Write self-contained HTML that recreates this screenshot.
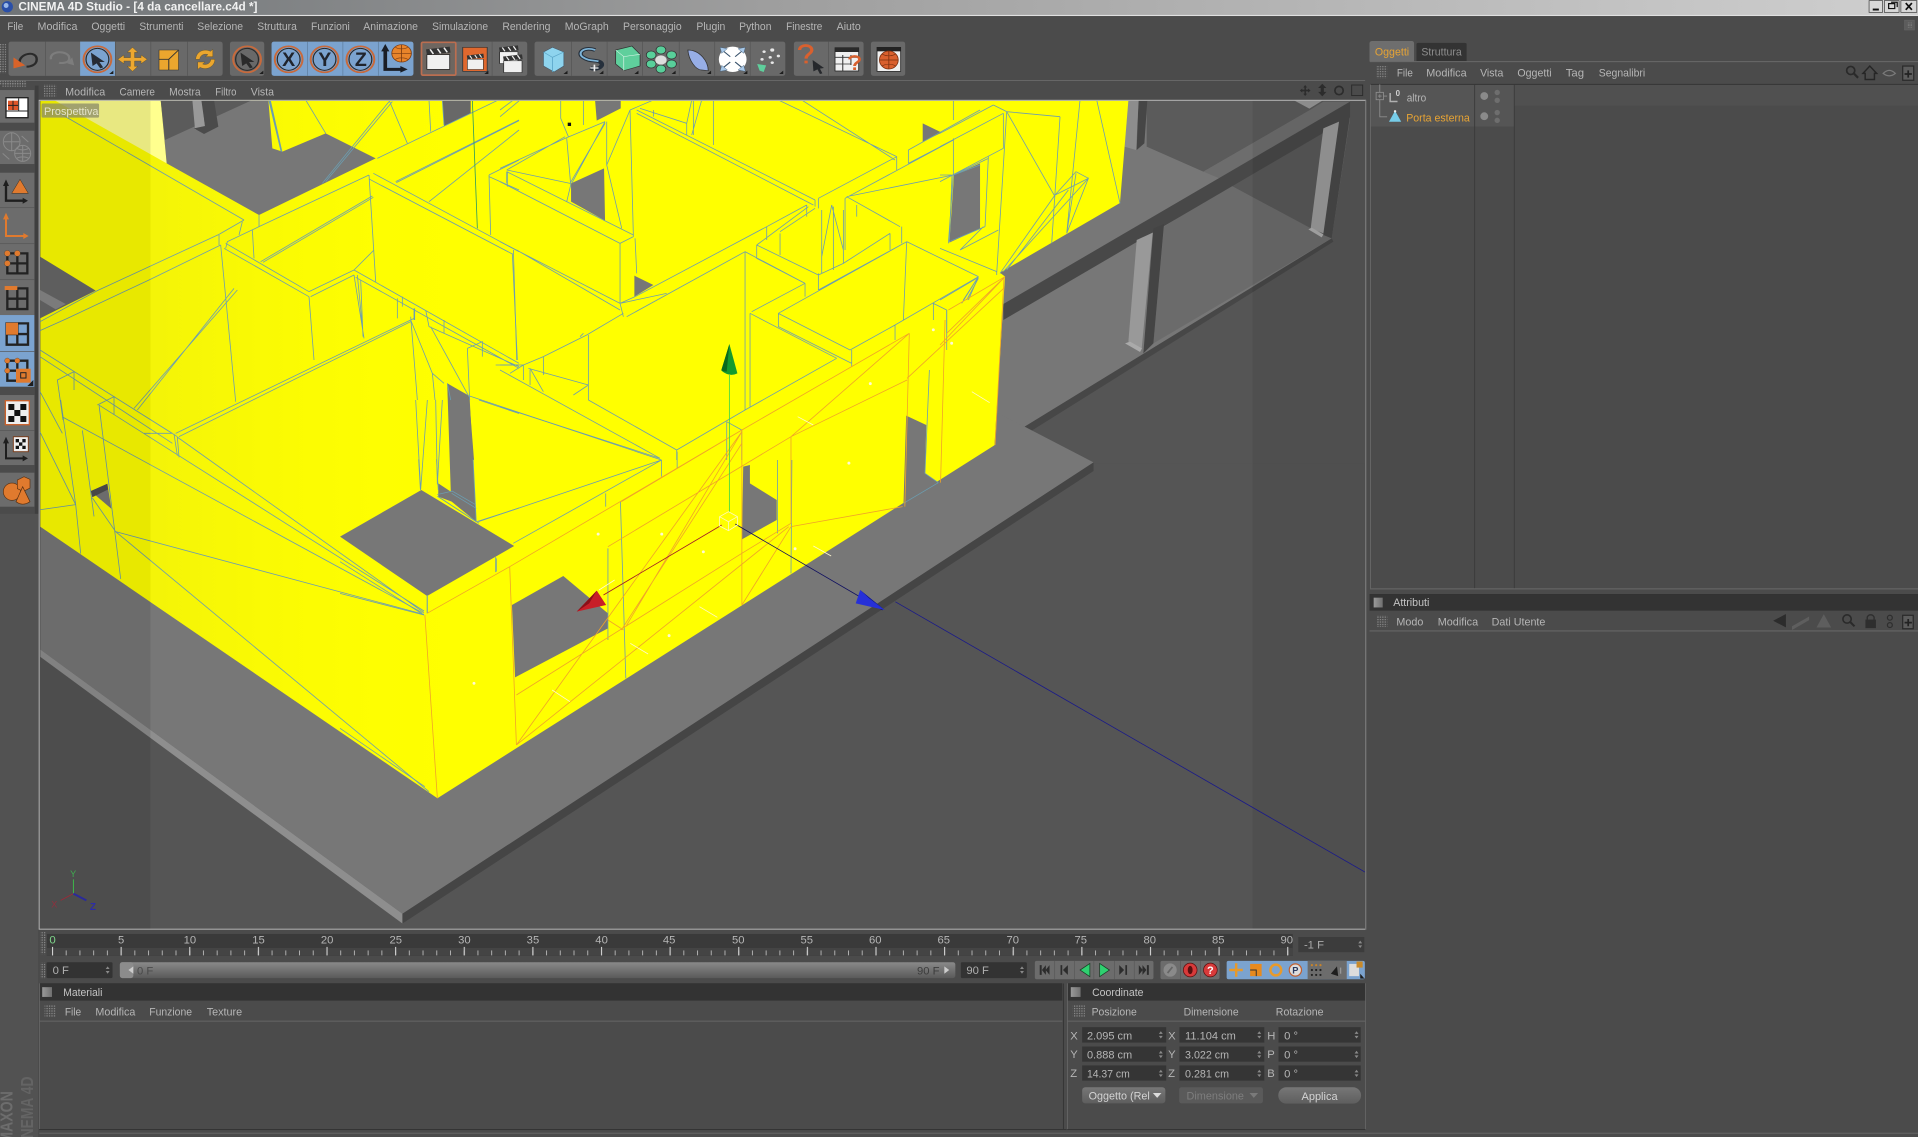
<!DOCTYPE html>
<html lang="it"><head><meta charset="utf-8"><title>CINEMA 4D Studio</title>
<style>
html,body{margin:0;padding:0;background:#4b4b4b;width:1918px;height:1137px;overflow:hidden}
svg{display:block}
text{font-family:"Liberation Sans",sans-serif;font-size:9.2px;fill:#b6b6b6}
.l path,path.l{fill:none;vector-effect:non-scaling-stroke;stroke-width:.8}
.b path{stroke:#6c9db0}
.o path{stroke:#f0a428}
.w path{stroke:#fff8d0}
</style></head><body>
<svg width="1918" height="1137" viewBox="0 0 1568 929.5" preserveAspectRatio="none" xmlns="http://www.w3.org/2000/svg">
<defs>
<linearGradient id="tb" x1="0" x2="1" y1="0" y2="0"><stop offset="0" stop-color="#6f7376"/><stop offset=".4" stop-color="#9e9e9e"/><stop offset="1" stop-color="#cfcfcf"/></linearGradient>
<linearGradient id="sl" x1="0" x2="0" y1="0" y2="1"><stop offset="0" stop-color="#8a8a8a"/><stop offset="1" stop-color="#5a5a5a"/></linearGradient>
<linearGradient id="btn" x1="0" x2="0" y1="0" y2="1"><stop offset="0" stop-color="#777"/><stop offset="1" stop-color="#5e5e5e"/></linearGradient>
<linearGradient id="sq" x1="0" x2="1" y1="0" y2="0"><stop offset="0" stop-color="#9a9a9a"/><stop offset="1" stop-color="#707070"/></linearGradient>
<linearGradient id="yg" x1="123" x2="403" y1="0" y2="0" gradientUnits="userSpaceOnUse"><stop offset="0" stop-color="#e8e810" stop-opacity=".5"/><stop offset="1" stop-color="#ffff00" stop-opacity="0"/></linearGradient>
<clipPath id="ycl"><path d="M33 82 H922.5 L915.6 166 L817.5 223 L821.6 226 L813 364 L357.6 652.6 L33 430.6Z"/></clipPath>
<pattern id="gp" width="2" height="2" patternUnits="userSpaceOnUse"><rect width="1" height="1" fill="#8e8e8e"/></pattern>
<pattern id="tk" width="11.22" height="20" patternUnits="userSpaceOnUse" patternTransform="translate(42.5,776)"><rect width=".8" y="1" height="4" fill="#b0b0b0"/></pattern>
<pattern id="tkb" width="56.1" height="20" patternUnits="userSpaceOnUse" patternTransform="translate(42.5,774)"><rect width=".9" height="7" fill="#d0d0d0"/></pattern>
<path id="sp" d="M0-3 L1.6-.8 H-1.6Z M0 3 L1.6 .8 H-1.6Z" fill="#8a8a8a"/>
<g id="ring"><ellipse rx="34" ry="39" fill="none" stroke="#c86a3c" stroke-width="5"/><ellipse rx="28" ry="33" fill="none" stroke="#2a2a2a" stroke-width="3"/></g>
<g id="clap"><rect x="-28" y="-12" width="56" height="44" fill="#f0f0f0" stroke="#222" stroke-width="2"/><path d="M-30-28 L28-36 L30-18 L-28-12Z" fill="#333"/><path d="M-20-28 l8 14 M-2-30 l8 14 M14-33 l8 14" stroke="#eee" stroke-width="4" fill="none"/></g>
<path id="tri" d="M0 0 l10 0 l0 -10 z" fill="#1d1d1d"/>
</defs>

<rect width="1568" height="930" fill="#4b4b4b"/>
<!-- title -->
<rect width="1568" height="12.4" fill="url(#tb)"/>
<rect y="12.2" width="1568" height=".9" fill="#e0e0e0"/>
<circle cx="6" cy="5.5" r="4.6" fill="#2a4fa8"/><circle cx="5" cy="4.5" r="2" fill="#9ab8e8"/>
<text x="15" y="8.6" textLength="195.5" lengthAdjust="spacingAndGlyphs" style="font-size:9.6px;font-weight:bold;fill:#f2f2f2">CINEMA 4D Studio - [4 da cancellare.c4d *]</text>
<g stroke="#444" stroke-width=".6"><rect x="1528" y=".5" width="11" height="9.6" fill="#d8d8d8"/><rect x="1540.5" y=".5" width="12" height="9.6" fill="#d8d8d8"/><rect x="1554" y=".5" width="13" height="9.6" fill="#d8d8d8"/></g>
<rect x="1531" y="7" width="5" height="1.6" fill="#111"/>
<path d="M1544 3h5v4h-5z M1546 1.8h5v4" fill="none" stroke="#111" stroke-width="1"/>
<path d="M1558 2.5 l5 5.5 M1563 2.5 l-5 5.5" stroke="#111" stroke-width="1.4"/>

<!-- menu -->
<g>
<text x="6" y="24.4" textLength="13" lengthAdjust="spacingAndGlyphs">File</text>
<text x="30.7" y="24.4" textLength="32.6" lengthAdjust="spacingAndGlyphs">Modifica</text>
<text x="74.7" y="24.4" textLength="27.6" lengthAdjust="spacingAndGlyphs">Oggetti</text>
<text x="114" y="24.4" textLength="36" lengthAdjust="spacingAndGlyphs">Strumenti</text>
<text x="161.3" y="24.4" textLength="37.4" lengthAdjust="spacingAndGlyphs">Selezione</text>
<text x="210.3" y="24.4" textLength="32.4" lengthAdjust="spacingAndGlyphs">Struttura</text>
<text x="254.3" y="24.4" textLength="31.7" lengthAdjust="spacingAndGlyphs">Funzioni</text>
<text x="297" y="24.4" textLength="44.7" lengthAdjust="spacingAndGlyphs">Animazione</text>
<text x="353.3" y="24.4" textLength="45.7" lengthAdjust="spacingAndGlyphs">Simulazione</text>
<text x="410.7" y="24.4" textLength="39.3" lengthAdjust="spacingAndGlyphs">Rendering</text>
<text x="461.7" y="24.4" textLength="36" lengthAdjust="spacingAndGlyphs">MoGraph</text>
<text x="509.3" y="24.4" textLength="48" lengthAdjust="spacingAndGlyphs">Personaggio</text>
<text x="569.3" y="24.4" textLength="23.7" lengthAdjust="spacingAndGlyphs">Plugin</text>
<text x="604.3" y="24.4" textLength="26.4" lengthAdjust="spacingAndGlyphs">Python</text>
<text x="642.7" y="24.4" textLength="29.6" lengthAdjust="spacingAndGlyphs">Finestre</text>
<text x="684" y="24.4" textLength="19.7" lengthAdjust="spacingAndGlyphs">Aiuto</text>
</g>
<rect x="1557" y="16.5" width="8" height="8" fill="#5c5c5c" stroke="#666" stroke-width=".5"/>
<rect x="1559" y="18.5" width="4" height="4" fill="url(#gp)"/>

<!-- toolbar backgrounds -->
<rect x="0" y="36" width="5" height="24" fill="url(#gp)"/>
<g>
<rect x="7" y="34" width="175" height="28" rx="2" fill="#696969"/>
<rect x="65.5" y="34" width="28.8" height="28" fill="#7ba3cf"/>
<rect x="188" y="34" width="28" height="28" rx="2" fill="#696969"/>
<rect x="222" y="34" width="116" height="28" rx="2" fill="#7ba3cf"/>
<rect x="344" y="34" width="87" height="28" rx="2" fill="#696969"/>
<rect x="344.6" y="34.6" width="28" height="26.8" rx="1" fill="#6e6660" stroke="#bb6e50" stroke-width="1.4"/>
<rect x="437" y="34" width="205" height="28" rx="2" fill="#696969"/>
<rect x="649" y="34" width="57" height="28" rx="2" fill="#696969"/>
<rect x="712" y="34" width="28" height="28" rx="2" fill="#696969"/>
</g>
<g fill="#565656">
<rect x="37" y="34" width=".6" height="28"/><rect x="94" y="34" width=".6" height="28"/><rect x="123" y="34" width=".6" height="28"/><rect x="153" y="34" width=".6" height="28"/>
<rect x="251" y="34" width=".6" height="28" fill="#5f7f9f"/><rect x="280" y="34" width=".6" height="28" fill="#5f7f9f"/><rect x="309" y="34" width=".6" height="28" fill="#5f7f9f"/>
<rect x="402" y="34" width=".6" height="28"/><rect x="467" y="34" width=".6" height="28"/><rect x="496" y="34" width=".6" height="28"/><rect x="525" y="34" width=".6" height="28"/><rect x="555" y="34" width=".6" height="28"/><rect x="584" y="34" width=".6" height="28"/><rect x="613" y="34" width=".6" height="28"/><rect x="677" y="34" width=".6" height="28"/>
</g>
<!-- toolbar icons zoom coords -->
<g transform="scale(.3333,.2725)">
<path d="M48 190 C45 160 90 150 90 178 C90 195 75 200 65 200" fill="none" stroke="#2a2a2a" stroke-width="6"/>
<path d="M33 172 L62 196 L33 205Z" fill="#d8632a"/>
<path d="M125 178 C120 150 170 150 170 175 C170 190 150 190 145 188" fill="none" stroke="#7d7d7d" stroke-width="6"/><path d="M165 190 l12-18 l5 24z" fill="#7d7d7d"/>
<g transform="translate(239,178)"><use href="#ring"/><path d="M-16-20 L18 8 L5 8 L14 24 L7 27 L-2 12 L-12 20Z" fill="#262b33"/></g>
<path d="M325 142 l13 15 h-8 v16 h16 v-8 l15 13 -15 13 v-8 h-16 v16 h8 l-13 15 -13-15 h8 v-16 h-16 v8 l-15-13 15-13 v8 h16 v-16 h-8z" fill="#eda830" stroke="#5a4a20" stroke-width="1"/>
<rect x="390" y="150" width="48" height="60" fill="#eba62e" stroke="#333" stroke-width="1.5"/><path d="M390 178 h24 v32 M414 178 L438 150" stroke="#333" stroke-width="2.5" fill="none"/>
<path d="M480 178 a24 28 0 0 1 36-24 l6-6 v22 h-18 l6-6 a14 16 0 0 0-20 14z M527 178 a24 28 0 0 1-36 24 l-6 6 v-22 h18 l-6 6 a14 16 0 0 0 20-14z" fill="#eba62e" stroke="#5a4a20"/>
<use href="#tri" x="268" y="222"/>
<g transform="translate(606,178)"><use href="#ring"/><path d="M-16-20 L18 8 L5 8 L14 24 L7 27 L-2 12 L-12 20Z" fill="#2a2a2a"/></g>
<use href="#tri" x="636" y="222"/>
<g transform="translate(708,178)"><use href="#ring"/></g><g transform="translate(796,178)"><use href="#ring"/></g><g transform="translate(884,178)"><use href="#ring"/></g>
</g>
<text x="236" y="54" text-anchor="middle" style="font-size:16px;font-weight:bold;fill:#20242c">X</text>
<text x="265.5" y="54" text-anchor="middle" style="font-size:16px;font-weight:bold;fill:#20242c">Y</text>
<text x="295" y="54" text-anchor="middle" style="font-size:16px;font-weight:bold;fill:#20242c">Z</text>
<g transform="scale(.3333,.2725)">
<path d="M945 150 V208 H985" fill="none" stroke="#1a1e26" stroke-width="9"/><path d="M945 132 l-10 22 h20z M1000 208 l-18-10 v20z" fill="#1a1e26"/>
<ellipse cx="985" cy="160" rx="24" ry="26" fill="#e8842a" stroke="#7a3a10" stroke-width="2"/><path d="M961 160h48M985 134v52M970 142c8 6 22 6 30 0M970 178c8-6 22-6 30 0" stroke="#7a3a10" fill="none" stroke-width="2"/>
<use href="#clap" x="1075" y="176"/>
<rect x="1135" y="142" width="60" height="72" fill="#e0682e" stroke="#333" stroke-width="2"/><use href="#clap" transform="translate(1166,186) scale(.7)"/><use href="#tri" x="1188" y="222"/>
<use href="#clap" transform="translate(1248,165) scale(.8)"/><use href="#clap" transform="translate(1258,192) scale(.8)"/>
<path d="M1355 142 l28 14 v42 l-24 18 -26-18 v-42z" fill="#8ed4ee" stroke="#456" stroke-width="1.5"/><path d="M1355 172 l28-16 M1355 172 l-22-16 M1355 172 v44" stroke="#5aa6c8" stroke-width="2" fill="none"/>
<use href="#tri" x="1382" y="222"/>
<path d="M1460 150 c-30-12-45 10-30 22 c15 12 25 8 38 12 c20 8 0 30-20 20" fill="none" stroke="#26303c" stroke-width="11"/><path d="M1460 150 c-30-12-45 10-30 22 c15 12 25 8 38 12" fill="none" stroke="#7db4d8" stroke-width="5"/>
<path d="M1448 204 h20 M1458 194 v20" stroke="#eee" stroke-width="4"/><use href="#tri" x="1470" y="222"/>
<path d="M1510 150 l40-12 l20 25 v35 l-40 14 -20-20z" fill="#5fcf9c" stroke="#333" stroke-width="2"/><path d="M1510 150 l20 20 l40-7 M1530 170 v42" stroke="#e8f8f0" fill="none" stroke-width="1.5"/><use href="#tri" x="1556" y="222"/>
</g>
<g transform="translate(523,0) scale(.3333,.2725)">
<g fill="#58cf9a" stroke="#333" stroke-width="2"><circle cx="52" cy="150" r="12"/><circle cx="78" cy="165" r="12"/><circle cx="78" cy="192" r="12"/><circle cx="52" cy="207" r="12"/><circle cx="28" cy="192" r="12"/><circle cx="28" cy="165" r="12"/></g><circle cx="52" cy="180" r="14" fill="#ddd"/>
<use href="#tri" x="78" y="222"/>
<path d="M118 150 c30 0 50 35 50 62 l-16-2 c-15 0-32-30-34-60z" fill="#97aee6" stroke="#333" stroke-width="2"/><use href="#tri" x="165" y="222"/>
<ellipse cx="228" cy="178" rx="34" ry="38" fill="#fff"/>
<path d="M204 152 l18 18 M252 152 l-18 18 M204 204 l18-18 M252 204 l-18-18" stroke="#36506a" stroke-width="3"/><path d="M197 142 l18 4 -14 14z M259 142 l-18 4 14 14z M197 214 l18-4 -14-14z M259 214 l-18-4 14-14z" fill="#a8c8e8" stroke="#36506a"/>
<use href="#tri" x="254" y="222"/>
<g fill="#e8e8e8"><circle cx="325" cy="150" r="5"/><circle cx="305" cy="155" r="4"/><circle cx="340" cy="168" r="4"/><circle cx="320" cy="172" r="4"/><circle cx="300" cy="178" r="4"/><circle cx="325" cy="188" r="4"/></g><path d="M288 192 l22 4 -6 20 -10-4z" fill="#5fcf9c"/><use href="#tri" x="342" y="222"/>
<path d="M392 150 c0-18 30-18 30 0 c0 12-14 12-14 26 M408 182 v8" fill="none" stroke="#d9602e" stroke-width="8"/>
<path d="M424 180 l28 24 -10 2 6 14 -6 2 -6-14 -10 6z" fill="#26282c"/>
<path d="M479 143 h58 v70 h-58z" fill="#f0f0f0" stroke="#222" stroke-width="2"/><path d="M479 150 h58" stroke="#2a2a2a" stroke-width="12"/><path d="M479 172 h58 M479 192 h40 M498 165 v48 M518 165 v30" stroke="#333" stroke-width="2.5"/>
<path d="M515 178 c0-12 24-12 24 0 c0 9-12 9-12 20 M527 202 v8" fill="none" stroke="#d9602e" stroke-width="7"/>
<rect x="582" y="142" width="58" height="72" fill="#f0f0f0" stroke="#222" stroke-width="2"/><rect x="582" y="142" width="58" height="12" fill="#222"/>
<ellipse cx="611" cy="180" rx="23" ry="27" fill="#d9602e" stroke="#7a3010" stroke-width="2"/><path d="M588 180h46M611 153v54M595 163c10 6 22 6 32 0M595 197c10-6 22-6 32 0" stroke="#7a3010" fill="none" stroke-width="2"/>
</g>

<!-- second bar / view header -->
<rect x="0" y="65.4" width="1116" height=".8" fill="#666"/>
<rect x="0" y="66" width="21" height="3" fill="url(#gp)"/>
<rect x="36" y="69" width="10" height="10" fill="url(#gp)"/>
<text x="53.3" y="78" textLength="32.7" lengthAdjust="spacingAndGlyphs">Modifica</text>
<text x="97.7" y="78" textLength="29" lengthAdjust="spacingAndGlyphs">Camere</text>
<text x="138.3" y="78" textLength="25.7" lengthAdjust="spacingAndGlyphs">Mostra</text>
<text x="176" y="78" textLength="17.3" lengthAdjust="spacingAndGlyphs">Filtro</text>
<text x="205" y="78" textLength="19" lengthAdjust="spacingAndGlyphs">Vista</text>
<g fill="#2c2c2c"><path d="M1067 69.5 l1.6 2h-1v1.8h1.8v-1l2 1.7-2 1.7v-1h-1.8v1.8h1l-1.6 2-1.6-2h1v-1.8h-1.8v1l-2-1.7 2-1.7v1h1.8v-1.8h-1z"/><path d="M1081 68.5 l3.4 3.4h-2.1v3.2h2.1l-3.4 3.7-3.4-3.7h2.1v-3.2h-2.1z"/><circle cx="1094.7" cy="74" r="3.4" fill="none" stroke="#2c2c2c" stroke-width="1.4"/><rect x="1105" y="69.5" width="9" height="8.6" fill="none" stroke="#2c2c2c" stroke-width=".8"/></g>

<!-- VIEWPORT -->
<svg x="32.4" y="82.4" width="1083.4" height="676.8" viewBox="32.4 82.4 1083.4 676.8">
<rect x="32" y="82" width="1085" height="678" fill="#555"/>
<!-- right back scene in zoom11 coords -->
<g transform="translate(768.5,81.75) scale(.2725)">
<path d="M590 0 H1290 V1090 H0 V0Z" fill="#555"/>
<path d="M600 0 L620 140 L790 215 L1110 30 L1050 0Z" fill="#5b5b5b"/>
<path d="M1110 30 L1050 0 H1230 L1230 10Z" fill="#5b5b5b"/>
<path d="M0 0 L620 0 L620 140 L790 215 L1110 30 L1230 5 L1230 55 L1175 415 L254 980 L0 1090Z" fill="#777"/>
<path d="M595 0 L622 0 L613 130 L590 150Z" fill="#464646"/>
<path d="M565 0 L596 0 L588 150 L553 140Z" fill="#8d8d8d"/>
<path d="M790 215 L1110 30 L1150 5 L1230 5 L850 240Z" fill="#6d6d6d"/>
<path d="M1060 0 L1150 0 L1108 26Z" fill="#979797"/>
<path d="M860 250 L1230 50 L1175 415 L1110 385Z" fill="#585858"/>
<path d="M672 380 L870 255 L1150 405 L1175 415 L640 730Z" fill="#6b6b6b"/>
<path d="M190 612 L1230 5 L1230 52 L190 660Z" fill="#484848"/>
<path d="M640 385 L672 372 L640 730 L610 760Z" fill="#444"/>
<path d="M1197 60 L1230 45 L1175 415 L1150 405Z" fill="#484848"/>
<path d="M590 420 L638 398 L605 745 L565 725Z" fill="#999"/>
<path d="M555 730 L570 725 L606 745 L600 756Z" fill="#aaa"/>
<path d="M1150 85 L1197 65 L1150 400 L1112 385Z" fill="#999"/>
<path d="M1105 388 L1115 383 L1150 403 L1145 412Z" fill="#aaa"/>
<path d="M254 980 L1175 415 L1180 425 L275 992Z" fill="#474747"/>
</g>
<!-- slab -->
<path d="M33 425 V531 L329 747 L894 378 L838 349 L800 330 V226 L33 226Z" fill="#777"/>
<path d="M33 531 L329 747 V755 L33 537Z" fill="#8e8e8e"/>
<path d="M329 747 L894 378 L894 385 L329 755Z" fill="#454545"/>
<!-- yellow -->
<path d="M33 82 H922.5 L915.6 166 L817.5 223 L821.6 226 L813 364 L357.6 652.6 L33 430.6Z" fill="#ff0"/>
<rect x="123" y="82" width="280" height="580" fill="url(#yg)" clip-path="url(#ycl)"/>

<!-- holes zoom9 -->
<g transform="translate(31.9,81.75) scale(.2725)">
<path d="M45 0 H365 L383 190Z" fill="#ffff8e"/>
<path d="M365 0 H688 L700 145 L730 155 L860 100 L1010 175 L660 345 L383 190Z" fill="#777"/>
<path d="M365 0 H640 L378 120Z" fill="#5b5b5b"/>
<path d="M460 0 H490 L498 85 L468 88Z" fill="#999"/><path d="M487 0 H525 L538 80 L495 102 L465 85 L498 78Z" fill="#4b4b4b"/>
<path d="M1210 0 H1295 V40 L1215 78Z" fill="#686868"/>
<path d="M3 470 L170 572 L3 655Z" fill="#686868"/><path d="M3 570 L80 612 L50 628 L3 600Z" fill="#888"/>
<path d="M1225 850 L1290 890 L1305 1080 H1235Z" fill="#777"/>
<path d="M688 0 L725 155 L730 155 L695 0Z" fill="#6c9db0"/>
</g>
<!-- holes zoom10 -->
<g transform="translate(408.8,81.75) scale(.2725)">
<path d="M285 0 H362 V25 L290 62Z M213 250 L312 205 L315 362 L213 305Z M403 527 L460 555 L403 590Z M1268 70 L1325 98 L1268 125Z M1362 225 L1440 190 V385 L1348 428Z" fill="#777"/>
<rect x="203" y="68" width="10" height="10" fill="#111"/>
</g>
<!-- holes zoom8 -->
<g transform="translate(278,261.6) scale(.365,.2725)">
<path d="M0 650 L182 510 L390 678 L195 828Z" fill="#777"/>
<path d="M385 855 L500 768 L600 880 V925 L392 1072Z" fill="#777"/>
<path d="M240 190 L290 228 L305 605 L250 545 L220 530 L220 490 L248 515Z" fill="#777"/>
<path d="M903 440 L918 435 V490 L978 540 V600 L900 658Z" fill="#777"/>
<path d="M1268 287 L1313 315 L1310 460 L1340 488 L1262 550Z" fill="#777"/>
</g>
<!-- hole z12 -->
<g transform="translate(31.9,327) scale(.2725,.276)">
<path d="M155 270 L205 248 L217 322Z" fill="#777"/><path d="M155 270 L205 248 L207 265 L160 288Z" fill="#505050"/>
</g>

<!-- blue lines zoom9 -->
<g class="l b" transform="translate(31.9,81.75) scale(.2725)">
<path d="M45 30 L615 360 M615 360 L540 403 L175 572 L3 665 M545 435 L330 540 L85 655 L3 692 M540 405 V435 M545 435 L590 905 M610 365 L600 405 M640 390 L645 475 M660 345 V380 L565 425 L560 445 M660 380 L990 225 M1015 175 L1440 -30 M1070 245 L1440 60 M1072 248 L1440 62 M1170 305 L1440 90 M990 225 L1010 545 M1000 288 L665 485 M1003 292 L672 487 M1003 220 L1440 455 M992 238 L1420 462 M1420 460 L1435 780 M555 445 L810 590 M560 430 L810 575 M810 575 L945 510 M815 590 L945 525 M810 590 L825 780 M945 510 L1440 790 M950 532 L1440 805 M945 525 L975 715 M965 540 L972 710 M955 525 L972 700 M1075 595 V655 M1090 590 V620 M1125 625 V660 M1127 625 V660 M1125 655 L410 1000 M1115 665 L420 1010 M595 570 L285 925 M585 565 L295 930 M1005 450 L945 510 M1060 5 L860 245 M1050 5 L850 250 M800 0 L860 100 M1050 0 L1105 130 M1170 0 L1175 95 M1210 0 L1215 75 M1350 225 L1355 405 M1350 225 L1440 180 M1405 215 V260 M1350 230 L1440 270 M1115 650 L1135 900 M1115 660 L1180 820 L1188 900 M1175 680 L1290 890 M1180 820 L1215 850 M1160 630 L1170 680 M1170 680 L1440 800 M1215 660 V700 M1285 745 L1292 900 M1285 745 L1330 725 V770 M1225 850 L1235 900 M1370 795 H1440 M3 750 L415 1010 M3 770 L400 1030 M105 815 L55 840 L72 960 M105 815 V870 M175 915 L225 890 V945 M225 890 L400 1000 M315 1000 H400 M3 875 L70 1000"/>
<path d="M1300 0 L1315 385" style="stroke:#2a9a60"/>
</g>
<!-- blue lines zoom12 -->
<g class="l b" transform="translate(31.9,327) scale(.2725,.276)">
<path d="M3 95 L110 310 L125 455 M65 0 L110 310 M130 90 L165 345 M180 15 L245 530 M70 50 L1150 630 M180 15 L1155 625 M415 110 L1155 630 M230 390 L1155 635 M3 325 L110 310 M160 290 L230 390 L1170 1160 M1165 580 V630 M1370 465 V510 M405 100 L415 165 M415 110 L420 170 M1130 0 L1145 265 L1165 0 M1190 0 L1195 250 L1210 0 M1195 280 L1240 270 L1310 310 M1195 285 L1320 365 M1315 360 L1440 320 M1320 0 L1440 40"/>
</g>
<!-- blue lines zoom10 -->
<g class="l b" transform="translate(408.8,81.75) scale(.2725)">
<path d="M0 50 L60 0 M0 30 L40 0 M182 0 V55 L205 110 M250 0 V75 M0 205 L195 115 L315 65 M20 210 L195 110 M20 210 L210 250 M20 215 V250 M0 245 L360 430 M20 215 L400 405 M360 430 L400 410 M400 410 L390 30 M360 430 V610 M405 415 L410 520 M315 65 L215 250 M315 70 L210 250 M320 65 V195 L365 385 M390 30 L320 195 M200 115 L212 255 L200 305 M410 30 L945 300 M410 40 L940 315 M390 30 L460 0 M420 25 L560 70 V105 M575 0 L560 70 M575 105 L605 0 M640 0 V135 M460 30 V50 M580 0 V105 M835 0 L1190 170 M905 0 L1185 180 M955 295 L1190 170 M945 300 V320 M955 295 V325 M1190 170 V210 M1225 150 V190 M1225 150 L1440 30 M1225 190 L1340 130 M1040 290 L1360 225 M1035 295 L1360 120 M1040 290 L1200 380 M1035 295 V450 M1070 315 V350 M1360 115 V225 L1345 430 M1360 225 L1440 195 M995 315 L1030 450 M995 315 L965 470 M965 330 V520 M1000 320 V510 M955 520 V570 M955 570 L1220 425 M955 525 L1030 490 M1030 330 V490 L1170 400 M1205 380 V430 M1170 400 V450 M1220 425 L1210 660 M1220 425 L1435 530 M1435 530 L1185 675 M835 640 L1220 425 M835 640 L1050 750 M835 640 V680 L1055 790 M1050 750 L1185 675 M1185 675 V720 M1055 750 V800 M1340 630 L1300 610 M1300 610 V660 M1340 630 V750 M1435 530 L1390 600 M1435 535 L1400 600 M735 455 L915 550 M735 455 L380 650 M735 455 V930 M750 640 V920 M750 640 L1010 775 M755 635 L915 550 M915 550 V590 M770 435 L955 525 M770 435 V475 L915 550 M800 380 V420 M840 400 V465 M770 435 L925 320 M800 380 L920 315 M920 315 V350 M800 380 L405 590 M840 395 L945 325 M360 610 L500 580 M360 610 L370 650 M405 590 L360 610 M370 640 L260 705 L130 770 L70 795 M40 450 L50 780 M0 425 L360 610 M50 450 L360 630 M265 705 V900 M240 710 L250 700 M265 900 L530 1050 M0 810 L480 1075 M0 920 L480 1075 M0 795 H70 M70 795 V840 M85 805 L265 855 M90 805 L130 875 M70 795 L30 820 M130 770 V825 M265 855 L220 885 M90 805 V855 M530 1050 L735 930 L1010 775 M530 1050 V1080 M680 965 V1080 M680 965 L725 990 M725 990 V1080"/>
</g>
<!-- blue lines zoom11 -->
<g class="l b" transform="translate(768.5,81.75) scale(.2725)">
<path d="M40 0 V60 M200 35 L360 50 M200 35 L345 290 M200 35 L170 520 M160 15 L200 35 M0 100 L160 15 M190 40 V145 M0 225 L35 225 M40 225 L145 175 M0 140 L190 40 M190 145 L0 245 M145 170 L135 380 M36 225 L28 425 M28 425 L135 380 M360 50 L335 430 M420 0 L380 400 M470 0 L540 310 M345 285 L445 235 L380 400 M408 215 L445 235 M408 215 L345 285 M408 220 L380 400 M345 285 L180 520 M445 235 L190 515 M385 270 L200 510 M175 390 L60 450 M130 380 L60 450 M0 445 L170 515 M170 515 V525 M110 535 L0 600 M115 530 L65 610 M115 530 L85 600 M20 630 V700"/>
</g>
<g class="l o" transform="translate(768.5,81.75) scale(.2725)">
<path d="M195 530 L25 630 M195 530 L0 735 M195 530 L20 700 M192 530 L165 1035"/>
</g>
<!-- zoom8 lines -->
<g class="l b" transform="translate(278,261.6) scale(.365,.2725)">
<path d="M176 418 L180 510 M216 418 L220 510 M298 418 L305 605 M310 605 L720 420 M388 670 L720 420 M290 228 L720 420 M755 395 V445 M720 420 V470 M595 520 V560 M628 545 L640 1075 M600 685 V960 M350 715 V755 M1012 420 L1010 760 M980 420 V640 M188 885 L0 820 M188 885 L0 725 M195 825 V880 M0 1225 L190 1400 M220 530 L305 605 M250 520 L305 565 M1262 550 L1340 488 M1310 460 L1340 488 M1320 150 L1310 460"/>
</g>
<g class="l o" transform="translate(278,261.6) scale(.365,.2725)">
<path d="M380 740 L900 330 M195 880 L380 740 M900 330 L1275 40 M380 740 L395 1275 M190 885 L218 1435 M900 330 V855 M1010 350 V610 M1275 40 L1265 560 M1355 0 L1345 488 M630 545 L900 330 M395 1125 L900 700 L1010 610 M395 1275 L900 335 M395 1275 L1005 620 M640 920 L900 335 M630 930 L900 370 M600 680 L1010 350 L1270 180 M900 855 L1010 620 M1010 620 L1260 560 M600 900 L635 930 M1270 175 L1488 -97 M1010 350 L1275 40"/>
</g>
<g class="l w" transform="translate(278,261.6) scale(.365,.2725)">
<path d="M1060 678 L1100 708 M1415 215 L1455 248 M1025 290 L1060 315 M805 860 L845 892 M650 970 L690 1002 M475 1110 L515 1145 M615 780 L580 810"/>
</g>
<g fill="#fff8d8" transform="translate(278,261.6)">
<circle cx="211" cy="175" r="1.2"/><circle cx="263" cy="175" r="1.2"/><circle cx="297" cy="189.5" r="1.2"/><circle cx="372" cy="187" r="1.2"/><circle cx="416" cy="117" r="1.2"/><circle cx="433.5" cy="52" r="1.2"/><circle cx="485" cy="8" r="1.2"/><circle cx="500" cy="19" r="1.2"/><circle cx="109.5" cy="297" r="1.2"/><circle cx="269" cy="258" r="1.2"/>
</g>
<!-- safe frame bands -->
<rect x="32" y="82" width="91" height="678" fill="#000" opacity=".09"/>
<rect x="1024" y="82" width="92" height="678" fill="#000" opacity=".07"/>
<!-- prospettiva -->
<rect x="34" y="84.6" width="47" height="11.6" rx="1" fill="#8a8a6a" opacity=".75"/>
<text x="36" y="94" textLength="44.5" lengthAdjust="spacingAndGlyphs" style="fill:#e4e4c8">Prospettiva</text>
<!-- axis -->
<g transform="translate(278,261.6) scale(.365,.2725)">
<path class="l" d="M872 165 V575" style="stroke:#39d845"/>
<path class="l" d="M855 615 L590 825" style="stroke:#a01828"/>
<path class="l" d="M885 612 L1215 870" style="stroke:#101060"/>
<path d="M872 72 L890 160 Q872 172 854 152Z" fill="#149a2e"/><path d="M872 72 L866 155 Q858 155 854 150Z" fill="#0a6a1c"/>
<path d="M530 875 L575 812 L596 855Z" fill="#c81e28"/>
<path d="M530 875 L575 812 L558 850Z" fill="#8a1018"/>
<path d="M1220 870 L1165 810 L1155 850Z" fill="#2630d8"/>
<path d="M1220 870 L1165 810 L1185 835Z" fill="#101880"/>
<path d="M850 590 L870 575 L890 590 V615 L870 632 L850 618Z M850 590 L870 605 L890 590 M870 605 V632" fill="none" stroke="#fff8c0" stroke-width=".8" style="vector-effect:non-scaling-stroke"/>
</g>
<path class="l" d="M732 492 L1116 713" style="stroke:#1a1a8a"/>
<!-- corner gizmo -->
<g transform="translate(31.9,327) scale(.2725,.276)">
<path class="l" d="M103 1420 V1462" style="stroke:#3ad04a"/>
<path class="l" d="M103 1462 L65 1482" style="stroke:#a02838"/>
<path class="l" d="M103 1462 L142 1482" style="stroke:#2a2a9a;stroke-width:2"/>
</g>
<text x="59.8" y="717" text-anchor="middle" style="font-size:7.4px;fill:#3fae50">Y</text>
<text x="44.4" y="742" text-anchor="middle" style="font-size:7.4px;fill:#90303e">X</text>
<text x="76" y="744" text-anchor="middle" style="font-size:8.2px;font-weight:bold;fill:#2c2ca8">Z</text>
</svg>
<rect x="32" y="82" width="1084.4" height="677.6" fill="none" stroke="#b8b8b8" stroke-width=".8"/>

<!-- left toolbar -->
<rect x="0" y="420" width="31" height="510" fill="#525252"/>
<rect x="28.5" y="70" width="3" height="350" fill="#3f3f3f"/>
<rect x="2" y="67" width="20" height="4" fill="url(#gp)"/>
<g transform="translate(0,73.6) scale(.2725)">
<g fill="#6c6c6c">
<rect x="0" width="103" height="98" y="0"/><rect x="0" y="122" width="103" height="100"/><rect x="0" y="248" width="103" height="427"/><rect x="0" y="915" width="103" height="210"/><rect x="0" y="1148" width="103" height="102"/>
</g>
<rect x="0" y="675" width="103" height="215" fill="#7ba3cf"/>
<g fill="#555"><rect y="352" width="103" height="2"/><rect y="460" width="103" height="2"/><rect y="568" width="103" height="2"/><rect y="783" width="103" height="2"/><rect y="1020" width="103" height="2"/></g>
<!-- icon1 -->
<rect x="18" y="23" width="66" height="60" fill="#fff" stroke="#222" stroke-width="4"/><rect x="24" y="32" width="30" height="28" fill="#e0562a"/><path d="M24 46h30M39 32v28M18 63h66M56 25v38" stroke="#222" stroke-width="3" fill="none"/>
<!-- icon2 dim -->
<g fill="none" stroke="#8a8a8a" stroke-width="3"><ellipse cx="35" cy="155" rx="25" ry="27"/><path d="M12 155h46M35 128v54"/><ellipse cx="68" cy="190" rx="24" ry="24"/><path d="M44 190h48M68 166v48M50 175c10 6 26 6 36 0M50 205c10-6 26-6 36 0"/><path d="M8 190l20 18M65 138l20 18"/></g>
<!-- L triangle -->
<path d="M18 285 V332 H72" fill="none" stroke="#1e1e1e" stroke-width="7"/><path d="M18 268 l-9 20h18z M84 332 l-16-9v18z" fill="#1e1e1e"/><path d="M35 310 L60 268 L85 310Z" fill="#e07a2e" stroke="#3a2a1a" stroke-width="1.5"/>
<!-- L orange -->
<path d="M18 385 V438 H72" fill="none" stroke="#e07a2e" stroke-width="6"/><path d="M18 368 l-9 20h18z M86 438 l-16-9v18z" fill="#e07a2e"/>
<!-- grid points -->
<path d="M22 490 H82 V550 H22Z M22 520 H82 M52 490 V550" fill="none" stroke="#222" stroke-width="7"/><g fill="#e07a2e" stroke="#333"><circle cx="22" cy="490" r="9"/><circle cx="52" cy="490" r="9"/><circle cx="22" cy="520" r="9"/></g>
<!-- grid edges -->
<path d="M22 595 H82 V657 H22Z M22 626 H82 M52 595 V657" fill="none" stroke="#222" stroke-width="7"/><rect x="14" y="588" width="38" height="12" fill="#e07a2e"/>
<!-- grid poly -->
<path d="M20 700 H84 V764 H20Z M20 732 H84 M52 700 V764" fill="none" stroke="#222" stroke-width="7"/><rect x="18" y="698" width="36" height="36" fill="#e07a2e"/>
<!-- multi -->
<path d="M22 812 H82 V872 H22Z M22 842 H82 M52 812 V872" fill="none" stroke="#222" stroke-width="7"/><g fill="#e07a2e" stroke="#333"><circle cx="22" cy="812" r="8"/><circle cx="52" cy="812" r="8"/><circle cx="22" cy="842" r="8"/></g><rect x="48" y="836" width="44" height="42" fill="#e07a2e"/><rect x="62" y="848" width="16" height="16" fill="none" stroke="#222" stroke-width="3"/>
<path d="M100 870 v18 h-18z" fill="#1d1d1d"/>
<!-- checker -->
<rect x="16" y="932" width="72" height="72" fill="#eee" stroke="#c8602a" stroke-width="4"/><path d="M25 942h18v18h-18z M61 942h18v18h-18z M43 960h18v18h-18z M25 978h18v18h-18z M61 978h18v18h-18z" fill="#111"/>
<path d="M18 1058 V1105 H72" fill="none" stroke="#1e1e1e" stroke-width="6"/><path d="M18 1040 l-9 20h18z M84 1105 l-16-9v18z" fill="#1e1e1e"/>
<rect x="40" y="1040" width="45" height="45" fill="#eee" stroke="#7a4020" stroke-width="3"/><path d="M47 1047h10v10h-10z M67 1047h10v10h-10z M57 1057h10v10h-10z M47 1067h10v10h-10z M67 1067h10v10h-10z" fill="#111"/>
<!-- cubes -->
<circle cx="36" cy="1205" r="26" fill="#e07a2e" stroke="#5a3010" stroke-width="2"/><path d="M52 1170 l20-10 18 8 v26 l-20 10 -18-8z" fill="#e07a2e" stroke="#5a3010" stroke-width="2"/><path d="M68 1190 L90 1235 Q68 1250 48 1235Z" fill="#e07a2e" stroke="#5a3010" stroke-width="2"/>
</g>
<!-- logo -->
<svg x="0" y="860" width="31" height="69.5" viewBox="0 860 31 69.5">
<text transform="translate(10.4,935) rotate(-90)" textLength="43" lengthAdjust="spacingAndGlyphs" style="font-size:14px;font-weight:bold;fill:#6d6d6d">MAXON</text>
<text transform="translate(27,942) rotate(-90)" textLength="62" lengthAdjust="spacingAndGlyphs" style="font-size:14px;font-weight:bold;fill:#646464">CINEMA 4D</text>
</svg>

<!-- timeline -->
<rect x="33" y="762" width="5" height="18" fill="url(#gp)"/>
<rect x="38.3" y="763.5" width="1018.5" height="18" fill="#3a3a3a"/>
<rect x="38.3" y="775" width="1018.5" height="6.4" fill="#444"/>
<rect x="38.3" y="774" width="1018.5" height="8" fill="url(#tk)"/>
<rect x="38.3" y="774" width="1018.5" height="8" fill="url(#tkb)"/>
<g text-anchor="middle" style="font-size:9.4px">
<text x="43" y="771.5" style="fill:#7ed48a;font-size:9.4px">0</text>
<text x="99" y="771.5">5</text><text x="155.2" y="771.5">10</text><text x="211.3" y="771.5">15</text><text x="267.4" y="771.5">20</text><text x="323.5" y="771.5">25</text><text x="379.6" y="771.5">30</text><text x="435.7" y="771.5">35</text><text x="491.8" y="771.5">40</text><text x="547" y="771.5">45</text><text x="603.5" y="771.5">50</text><text x="659.5" y="771.5">55</text><text x="715.5" y="771.5">60</text><text x="771.5" y="771.5">65</text><text x="828" y="771.5">70</text><text x="883.5" y="771.5">75</text><text x="940" y="771.5">80</text><text x="996" y="771.5">85</text><text x="1052" y="771.5">90</text>
</g>
<rect x="1061.4" y="766" width="54" height="12.4" fill="#3c3c3c"/>
<text x="1066" y="775.6" style="fill:#aaa">-1 F</text><use href="#sp" x="1112" y="772"/>
<rect x="33" y="787" width="4" height="13" fill="url(#gp)"/>
<rect x="38" y="786.6" width="54" height="13" rx="1" fill="#333"/>
<text x="43" y="796.4" style="fill:#b0b0b0">0 F</text><use href="#sp" x="88" y="793"/>
<rect x="98" y="786.6" width="683" height="13" rx="2" fill="url(#sl)"/>
<rect x="98" y="786.6" width="11" height="13" rx="2" fill="#8c8c8c"/>
<path d="M109 790 l-4 3 4 3z M772 790 l4 3-4 3z" fill="#ccc"/>
<text x="112" y="796.6" style="fill:#4a4a4a">0 F</text><text x="749.7" y="796.6" style="fill:#3c3c3c">90 F</text>
<rect x="785.5" y="786.6" width="54" height="13" rx="1" fill="#333"/>
<text x="790" y="796.4" style="fill:#b0b0b0">90 F</text><use href="#sp" x="835.5" y="793"/>
<!-- transport -->
<rect x="846" y="785.5" width="97" height="15" rx="1.5" fill="#6c6c6c"/>
<rect x="948.7" y="785.5" width="48.3" height="15" rx="1.5" fill="#6c6c6c"/>
<rect x="1002.8" y="785.5" width="113" height="15" rx="1.5" fill="#7ba3cf"/>
<rect x="1069" y="785.5" width="32" height="15" fill="#6c6c6c"/>
<g fill="#555"><rect x="862" y="785.5" width=".5" height="15"/><rect x="878" y="785.5" width=".5" height="15"/><rect x="894" y="785.5" width=".5" height="15"/><rect x="911" y="785.5" width=".5" height="15"/><rect x="927" y="785.5" width=".5" height="15"/><rect x="965" y="785.5" width=".5" height="15"/><rect x="981" y="785.5" width=".5" height="15"/></g>
<g fill="#2c2c2c">
<path d="M850 789h1.6v8H850z M858 789v8l-3.2-4z M855 789v8l-3.2-4z"/>
<path d="M867 789h1.4v8H867z M873 789v8l-4-4z"/>
<path d="M915 789v8l4-4z M920 789h1.4v8H920z"/>
<path d="M931 789v8l3.2-4z M934 789v8l3.2-4z M937.6 789h1.6v8h-1.6z"/>
</g>
<path d="M891 787.6v10.8l-8-5.4z" fill="#2fd070" stroke="#1a3a24" stroke-width=".6"/>
<path d="M899 787.6v10.8l8-5.4z" fill="#2fd070" stroke="#1a3a24" stroke-width=".6"/>
<circle cx="956.6" cy="793" r="5.4" fill="#8a8a8a"/><path d="M954.5 795.5 l4-5" stroke="#666" stroke-width="1.4"/>
<circle cx="973" cy="793" r="5.6" fill="#d83a3a" stroke="#5a1010" stroke-width=".6"/><ellipse cx="973" cy="793" rx="2" ry="3.4" fill="#5a1010"/>
<circle cx="989.5" cy="793" r="5.6" fill="#d83a3a" stroke="#5a1010" stroke-width=".6"/><text x="989.5" y="796.4" text-anchor="middle" style="font-size:9px;font-weight:bold;fill:#fff">?</text>
<path d="M1010.6 787.5v11 M1005 793h11" stroke="#e89a2a" stroke-width="2"/>
<rect x="1022" y="788" width="9.4" height="10" fill="#e88a1e"/><path d="M1022 793h5v5" stroke="#333" fill="none" stroke-width=".8"/>
<circle cx="1043" cy="793" r="4.4" fill="none" stroke="#e89a2a" stroke-width="2"/>
<circle cx="1059" cy="793" r="5" fill="#ddd" stroke="#c06030" stroke-width="1"/><text x="1059" y="796" text-anchor="middle" style="font-size:7.6px;font-weight:bold;fill:#2a3a60">P</text>
<g fill="#c8842a"><circle cx="1072.5" cy="789" r=".9"/><circle cx="1076" cy="789" r=".9"/><circle cx="1079.5" cy="789" r=".9"/></g><g fill="#222"><circle cx="1072.5" cy="793" r=".9"/><circle cx="1076" cy="793" r=".9"/><circle cx="1079.5" cy="793" r=".9"/><circle cx="1072.5" cy="797" r=".9"/><circle cx="1076" cy="797" r=".9"/><circle cx="1079.5" cy="797" r=".9"/></g>
<path d="M1088 796 l5-6 1 8z" fill="#1e1e1e"/><path d="M1096 791v5" stroke="#999"/>
<rect x="1103" y="788" width="8" height="10" fill="#ddd"/><rect x="1109" y="786" width="5" height="5" fill="#c98a2a"/><path d="M1112 800 v-4 l3.5 4z" fill="#1d1d1d"/>

<!-- materiali -->
<rect x="32" y="803.8" width="836.5" height="14.2" fill="#333"/>
<rect x="34.5" y="807" width="8" height="8" fill="url(#sq)"/>
<text x="51.7" y="814.4" textLength="32" lengthAdjust="spacingAndGlyphs" style="fill:#c4c4c4">Materiali</text>
<rect x="36.5" y="822" width="9" height="9.5" fill="url(#gp)"/>
<text x="53" y="830" textLength="13.4" lengthAdjust="spacingAndGlyphs">File</text>
<text x="78" y="830" textLength="32.7" lengthAdjust="spacingAndGlyphs">Modifica</text>
<text x="122" y="830" textLength="35" lengthAdjust="spacingAndGlyphs">Funzione</text>
<text x="169" y="830" textLength="29" lengthAdjust="spacingAndGlyphs">Texture</text>
<rect x="32" y="834.4" width="836.5" height=".8" fill="#666"/>
<rect x="32" y="803.8" width=".7" height="120" fill="#666"/>
<rect x="32" y="923" width="840" height=".8" fill="#333"/>
<rect x="32" y="926" width="1536" height=".8" fill="#666"/>
<rect x="869" y="804" width=".8" height="119" fill="#353535"/>

<!-- coordinate -->
<rect x="872.4" y="803.8" width="244" height="14.2" fill="#333"/>
<rect x="875.4" y="807" width="8" height="8" fill="url(#sq)"/>
<text x="892.8" y="814.4" textLength="42" lengthAdjust="spacingAndGlyphs" style="fill:#c4c4c4">Coordinate</text>
<rect x="877" y="822" width="10" height="9.5" fill="url(#gp)"/>
<text x="892.4" y="830" textLength="37" lengthAdjust="spacingAndGlyphs">Posizione</text>
<text x="967.6" y="830" textLength="45" lengthAdjust="spacingAndGlyphs">Dimensione</text>
<text x="1043" y="830" textLength="39" lengthAdjust="spacingAndGlyphs">Rotazione</text>
<rect x="872.4" y="834.4" width="244" height=".8" fill="#666"/>
<rect x="872.4" y="803.8" width=".7" height="120" fill="#666"/>
<rect x="1116" y="803.8" width=".7" height="120" fill="#666"/>
<rect x="872.4" y="923" width="244" height=".8" fill="#333"/>
<g fill="#353535">
<rect x="884.7" y="839.7" width="68.7" height="12.6"/><rect x="964.2" y="839.7" width="69.4" height="12.6"/><rect x="1045.2" y="839.7" width="67.2" height="12.6"/>
<rect x="884.7" y="855.5" width="68.7" height="12.4"/><rect x="964.2" y="855.5" width="69.4" height="12.4"/><rect x="1045.2" y="855.5" width="67.2" height="12.4"/>
<rect x="884.7" y="871" width="68.7" height="12.4"/><rect x="964.2" y="871" width="69.4" height="12.4"/><rect x="1045.2" y="871" width="67.2" height="12.4"/>
</g>
<g style="fill:#a8a8a8">
<text x="875" y="849.6">X</text><text x="955" y="849.6">X</text><text x="1036" y="849.6">H</text>
<text x="875" y="865">Y</text><text x="955" y="865">Y</text><text x="1036" y="865">P</text>
<text x="875" y="880.6">Z</text><text x="955" y="880.6">Z</text><text x="1036" y="880.6">B</text>
<text x="888.6" y="849.8" textLength="37" lengthAdjust="spacingAndGlyphs">2.095 cm</text><text x="968.8" y="849.8" textLength="41.5" lengthAdjust="spacingAndGlyphs">11.104 cm</text><text x="1049.8" y="849.8">0 °</text>
<text x="888.6" y="865.4" textLength="37" lengthAdjust="spacingAndGlyphs">0.888 cm</text><text x="968.8" y="865.4" textLength="36" lengthAdjust="spacingAndGlyphs">3.022 cm</text><text x="1049.8" y="865.4">0 °</text>
<text x="888.6" y="881" textLength="35" lengthAdjust="spacingAndGlyphs">14.37 cm</text><text x="968.8" y="881" textLength="36" lengthAdjust="spacingAndGlyphs">0.281 cm</text><text x="1049.8" y="881">0 °</text>
</g>
<g>
<use href="#sp" x="949" y="846"/><use href="#sp" x="1029.5" y="846"/><use href="#sp" x="1109" y="846"/>
<use href="#sp" x="949" y="862"/><use href="#sp" x="1029.5" y="862"/><use href="#sp" x="1109" y="862"/>
<use href="#sp" x="949" y="877.5"/><use href="#sp" x="1029.5" y="877.5"/><use href="#sp" x="1109" y="877.5"/>
</g>
<rect x="884.7" y="888.8" width="68" height="13.2" rx="2.5" fill="url(#btn)"/>
<text x="890" y="899" textLength="50" lengthAdjust="spacingAndGlyphs" style="fill:#d4d4d4">Oggetto (Rel</text><path d="M942.5 893.5h7l-3.5 4z" fill="#ddd"/>
<rect x="964" y="888.8" width="68.5" height="13.2" rx="2" fill="#5a5a5a"/>
<text x="970" y="899" textLength="47" lengthAdjust="spacingAndGlyphs" style="fill:#7e7e7e">Dimensione</text><path d="M1021.5 893.5h7l-3.5 4z" fill="#7a7a7a"/>
<rect x="1045" y="888.8" width="67.7" height="13.4" rx="6.6" fill="url(#btn)"/>
<text x="1064" y="899.4" textLength="29.5" lengthAdjust="spacingAndGlyphs" style="fill:#d4d4d4">Applica</text>

<!-- right panel objects -->
<path d="M1119.6 50.4 V35.5 Q1119.6 33.5 1122 33.5 H1154 Q1156 33.5 1156 35.5 V50.4Z" fill="#6e6e6e"/>
<path d="M1158 50 V36 Q1158 35 1160 35 H1197 Q1199 35 1199 36 V50Z" fill="#333"/>
<text x="1124" y="45.4" textLength="28" lengthAdjust="spacingAndGlyphs" style="fill:#e8a434">Oggetti</text>
<text x="1162" y="45.4" textLength="33" lengthAdjust="spacingAndGlyphs" style="fill:#8e8e8e">Struttura</text>
<rect x="1120" y="50" width="448" height=".8" fill="#6a6a6a"/>
<rect x="1125" y="54" width="9" height="10" fill="url(#gp)"/>
<text x="1142" y="62.4" textLength="13" lengthAdjust="spacingAndGlyphs">File</text>
<text x="1166" y="62.4" textLength="33" lengthAdjust="spacingAndGlyphs">Modifica</text>
<text x="1210" y="62.4" textLength="19" lengthAdjust="spacingAndGlyphs">Vista</text>
<text x="1240.5" y="62.4" textLength="28" lengthAdjust="spacingAndGlyphs">Oggetti</text>
<text x="1280" y="62.4" textLength="15" lengthAdjust="spacingAndGlyphs">Tag</text>
<text x="1307" y="62.4" textLength="38" lengthAdjust="spacingAndGlyphs">Segnalibri</text>
<circle cx="1513" cy="57.6" r="3.3" fill="none" stroke="#2a2a2a" stroke-width="1.4"/><path d="M1515.5 60 l3.5 3.6" stroke="#2a2a2a" stroke-width="1.8"/>
<path d="M1523 60 l5.6-6 5.6 6 h-1.8 v5 h-7.6 v-5z" fill="none" stroke="#262626" stroke-width="1.2"/>
<path d="M1539.5 60 q5-5 10 0 q-5 4-10 0z" fill="none" stroke="#7a7a7a" stroke-width="1"/>
<rect x="1555.5" y="54" width="9" height="11.6" fill="#5c5c5c" stroke="#2a2a2a" stroke-width="1"/><path d="M1560 57.5v6M1557 60.5h6" stroke="#222" stroke-width="1.4"/>
<rect x="1120" y="68.6" width="448" height=".8" fill="#333"/>
<rect x="1120" y="69.4" width="85.4" height="34" fill="#555"/>
<rect x="1205.4" y="69.4" width="32.4" height="34" fill="#555"/>
<rect x="1238" y="69.4" width="330" height="17" fill="#505050"/>
<rect x="1120" y="69" width=".7" height="412" fill="#6a6a6a"/>
<rect x="1205.2" y="69" width=".7" height="412" fill="#3a3a3a"/>
<rect x="1237.6" y="69" width=".7" height="412" fill="#3a3a3a"/>
<rect x="1125" y="75.5" width="6" height="6" fill="none" stroke="#8e8e8e" stroke-width=".7"/>
<path d="M1126.5 78.5h3M1128 77v3M1128 69v6.5M1128 81.5v14H1134M1131 78.5h3" stroke="#8e8e8e" stroke-width=".7" fill="none"/>
<path d="M1136.5 76 v7 h6" fill="none" stroke="#b0b0b0" stroke-width="1.2"/>
<text x="1141" y="78.6" style="font-size:6.5px;font-weight:bold;fill:#d0d0d0">0</text>
<text x="1150" y="82.8" textLength="16" lengthAdjust="spacingAndGlyphs">altro</text>
<path d="M1140.5 90.5 l5 9 h-10z" fill="#76cce8"/><circle cx="1140.5" cy="91" r="1" fill="#eee"/>
<text x="1149.6" y="99.4" textLength="52" lengthAdjust="spacingAndGlyphs" style="fill:#e8a434">Porta esterna</text>
<g fill="#8a8a8a"><circle cx="1213.4" cy="78.5" r="3.2"/><circle cx="1213.4" cy="95" r="3.2"/></g>
<g fill="#6e6e6e"><circle cx="1224" cy="75.6" r="2.2"/><circle cx="1224" cy="82" r="2.2"/><circle cx="1224" cy="92" r="2.2"/><circle cx="1224" cy="98.4" r="2.2"/></g>
<rect x="1120" y="481" width="448" height=".8" fill="#6a6a6a"/>

<!-- attributes -->
<rect x="1116" y="82" width="1" height="678" fill="#707070"/>
<rect x="1119.6" y="485.6" width="448.4" height="13.6" fill="#333"/>
<rect x="1123" y="488.6" width="7.4" height="8" fill="url(#sq)"/>
<text x="1139" y="495.6" textLength="29.5" lengthAdjust="spacingAndGlyphs" style="fill:#c4c4c4">Attributi</text>
<rect x="1125.6" y="503" width="8.6" height="9.6" fill="url(#gp)"/>
<text x="1141.6" y="511.2" textLength="22" lengthAdjust="spacingAndGlyphs">Modo</text>
<text x="1175.4" y="511.2" textLength="33" lengthAdjust="spacingAndGlyphs">Modifica</text>
<text x="1219.4" y="511.2" textLength="44" lengthAdjust="spacingAndGlyphs">Dati Utente</text>
<rect x="1119.6" y="515.4" width="448.4" height=".8" fill="#6a6a6a"/>
<path d="M1449.6 507.5 l10.4-5.6 v11z" fill="#2c2c2c"/>
<path d="M1465 512 l14-8 v3 l-14 8z" fill="#5e5e5e"/>
<path d="M1485 513 l6-11 6 11z" fill="#5e5e5e"/>
<circle cx="1510" cy="506" r="3.4" fill="none" stroke="#2a2a2a" stroke-width="1.3"/><path d="M1512.5 508.4 l3.6 3.6" stroke="#2a2a2a" stroke-width="1.7"/>
<rect x="1525" y="506.5" width="8.6" height="7" fill="#2e2e2e"/><path d="M1526.5 506.5 v-2 a3 3 0 0 1 5.6 0 v2" fill="none" stroke="#2e2e2e" stroke-width="1.1"/>
<circle cx="1545" cy="505" r="2" fill="none" stroke="#2e2e2e"/><circle cx="1545" cy="511" r="2" fill="none" stroke="#2e2e2e"/>
<rect x="1555.5" y="503" width="8.6" height="11" fill="#5c5c5c" stroke="#2a2a2a"/><path d="M1560 506v6M1557 509h6" stroke="#222" stroke-width="1.4"/>
</svg>
</body></html>
